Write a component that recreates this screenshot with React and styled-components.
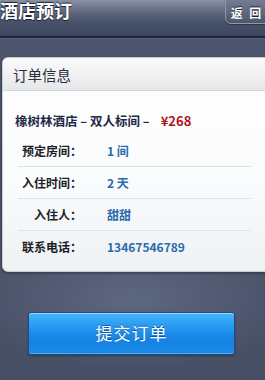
import styled, { createGlobalStyle } from 'styled-components';

const GlobalStyle = createGlobalStyle`
  html, body {
    margin: 0;
    padding: 0;
  }
  body {
    width: 265px;
    height: 380px;
    overflow: hidden;
    font-family: "Noto Sans CJK SC", "Noto Sans", sans-serif;
    background: #4a5369;
  }
`;

const Screen = styled.div`
  width: 265px;
  height: 380px;
  overflow: hidden;
  display: flex;
  flex-direction: column;
  background:
    radial-gradient(ellipse 160px 70px at 50% 300px, rgba(120, 130, 160, 0.45), rgba(120, 130, 160, 0) 100%),
    linear-gradient(#4c566e 0%, #4a5369 60%, #474f65 100%);
`;

const NavBar = styled.div`
  position: relative;
  height: 36px;
  flex-shrink: 0;
  background: linear-gradient(#8a93a6 0%, #636c81 30%, #485269 60%, #3d4760 100%);
  border-bottom: 2px solid #1f2535;
  box-shadow: 0 1px 0 #5a6580;
`;

const NavTitle = styled.div`
  padding-top: 1px;
  font-size: 18px;
  font-weight: 700;
  line-height: 18px;
  color: #ffffff;
  text-shadow: 0 -1px 1px #1c2233, 0 1px 1px #1c2233;
`;

const BackButton = styled.div`
  position: absolute;
  top: -6px;
  right: -8px;
  width: 48px;
  height: 30px;
  padding: 6px 6px 0 0;
  box-sizing: border-box;
  display: flex;
  justify-content: center;
  align-items: center;
  font-size: 12px;
  font-weight: 700;
  color: #ffffff;
  text-shadow: 0 -1px 0 #1c2233;
  border: 1px solid #9098aa;
  border-radius: 6px;
  background: linear-gradient(#7c8599, #4d566c);
  box-shadow: 0 1px 1px rgba(0, 0, 0, 0.35);
  word-spacing: 4px;
`;

const Card = styled.div`
  margin: 19px -10px 0 2px;
  height: 213px;
  flex-shrink: 0;
  border: 1px solid #c9ccd2;
  border-radius: 6px;
  overflow: hidden;
  display: flex;
  flex-direction: column;
  background: linear-gradient(#ffffff 0%, #fafbfc 60%, #eff1f3 100%);
  box-shadow: 0 1px 3px rgba(0, 0, 0, 0.4);
`;

const CardHeader = styled.div`
  height: 32px;
  padding-left: 10px;
  display: flex;
  align-items: center;
  font-size: 14.5px;
  color: #2a2f3a;
  background: linear-gradient(#fbfbfb, #e6e7e9);
  border-bottom: 1px solid #d4d6da;
`;

const CardBody = styled.div`
  padding-top: 14px;
  display: flex;
  flex-direction: column;
`;

const HotelLine = styled.div`
  height: 30px;
  padding-left: 12px;
  display: flex;
  align-items: center;
  font-size: 12.5px;
  font-weight: 700;
  color: #1f2a48;
  white-space: pre;
`;

const Price = styled.span`
  margin-left: 11px;
  font-size: 13px;
  color: #b3141a;
`;

const InfoRow = styled.div`
  height: 31px;
  display: flex;
  align-items: center;
  margin: 0 23px 0 15px;
  border-top: ${props => (props.first ? 'none' : '1px solid #dfe1e4')};
`;

const Label = styled.div`
  width: 64px;
  text-align: right;
  font-size: 12px;
  font-weight: 700;
  color: #1b1f29;
`;

const Value = styled.div`
  margin-left: 25px;
  font-size: 12px;
  font-weight: 700;
  color: #2c6bab;
`;

const SubmitButton = styled.button`
  margin: 40px 0 0 28px;
  width: 207px;
  height: 43px;
  flex-shrink: 0;
  padding: 0 0 2px;
  border: 1px solid #1d4f86;
  border-radius: 3px;
  font-family: "Noto Sans CJK SC", "Noto Sans", sans-serif;
  font-size: 17px;
  color: #ffffff;
  letter-spacing: 1px;
  text-shadow: 0 -1px 0 rgba(0, 40, 100, 0.5);
  background: linear-gradient(#45b6fa 0%, #2a9cf2 30%, #1a88e8 55%, #1583e3 70%, #1b8ae6 100%);
  box-shadow: inset 0 1px 0 rgba(255, 255, 255, 0.45), inset 0 -1px 0 rgba(255, 255, 255, 0.25), 0 1px 2px rgba(0, 0, 0, 0.35);
`;

const rows = [
  { label: '预定房间：', value: '1 间' },
  { label: '入住时间：', value: '2 天' },
  { label: '入住人：', value: '甜甜' },
  { label: '联系电话：', value: '13467546789' },
];

export default function App() {
  return (
    <>
      <GlobalStyle />
      <Screen>
        <NavBar>
          <NavTitle>酒店预订</NavTitle>
          <BackButton>返 回</BackButton>
        </NavBar>
        <Card>
          <CardHeader>订单信息</CardHeader>
          <CardBody>
            <HotelLine>
              橡树林酒店 – 双人标间 –<Price>¥268</Price>
            </HotelLine>
            {rows.map((row, index) => (
              <InfoRow key={row.label} first={index === 0}>
                <Label>{row.label}</Label>
                <Value>{row.value}</Value>
              </InfoRow>
            ))}
          </CardBody>
        </Card>
        <SubmitButton>提交订单</SubmitButton>
      </Screen>
    </>
  );
}
